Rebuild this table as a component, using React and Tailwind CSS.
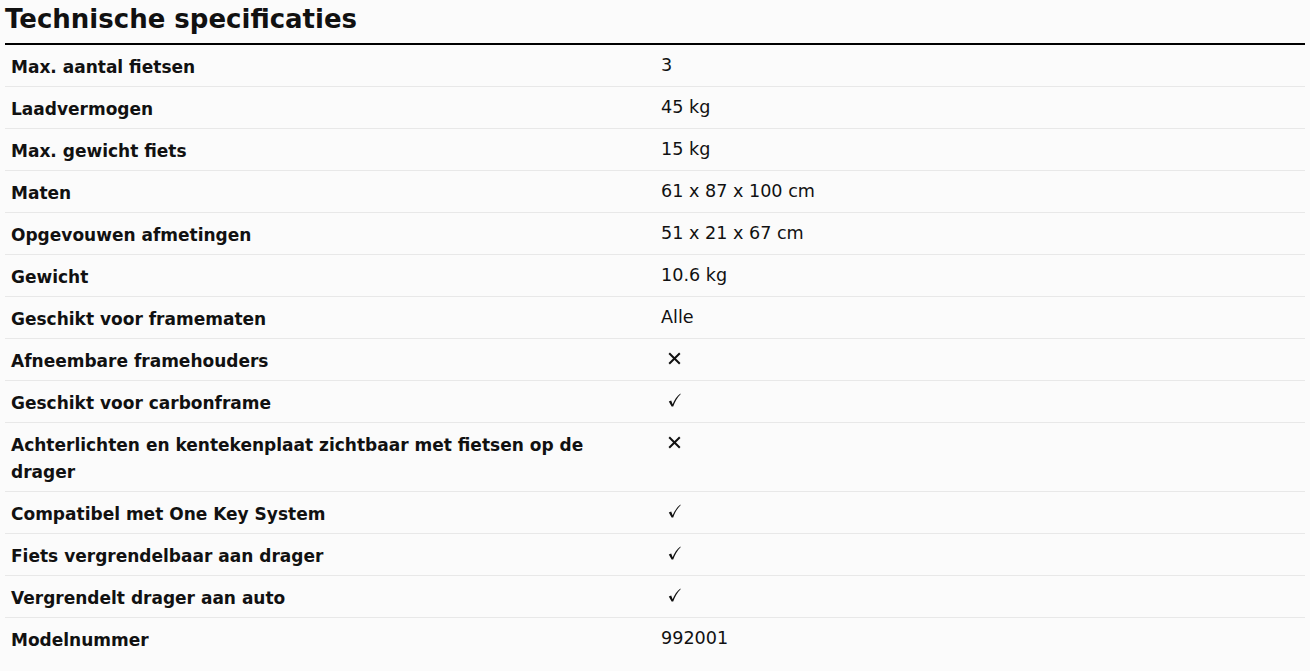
const specs = [
  ['Max. aantal fietsen', '3'],
  ['Laadvermogen', '45 kg'],
  ['Max. gewicht fiets', '15 kg'],
  ['Maten', '61 x 87 x 100 cm'],
  ['Opgevouwen afmetingen', '51 x 21 x 67 cm'],
  ['Gewicht', '10.6 kg'],
  ['Geschikt voor framematen', 'Alle'],
  ['Afneembare framehouders', 'no'],
  ['Geschikt voor carbonframe', 'yes'],
  ['Achterlichten en kentekenplaat zichtbaar met fietsen op de drager', 'no'],
  ['Compatibel met One Key System', 'yes'],
  ['Fiets vergrendelbaar aan drager', 'yes'],
  ['Vergrendelt drager aan auto', 'yes'],
  ['Modelnummer', '992001'],
];

function Cross() {
  return (
    <svg width="13" height="13" viewBox="0 0 13 13" className="inline-block ml-[7px] mt-[6px] align-top">
      <path d="M1.2 1.2 L11.8 11.8 M11.8 1.2 L1.2 11.8" stroke="#111" strokeWidth="2" fill="none" />
    </svg>
  );
}

function Check() {
  return (
    <svg width="13" height="14" viewBox="0 0 13 14" className="inline-block ml-[7px] mt-[5px] align-top">
      <path d="M0.8 8.6 L3.2 7.6 L4.6 11.2 C6.4 7.2 8.8 3.4 12.4 0.6 L12.6 1.2 C9.4 4.4 7 8.4 5.2 13.4 L3.6 13.4 Z" fill="#111" />
    </svg>
  );
}

export default function App() {
  return (
    <div className="min-h-screen bg-[#fbfbfb] px-[5px] pt-[2px] text-[#111] font-['DejaVu_Sans',sans-serif]">
      <h2 className="text-[26px] font-bold leading-[34px] pb-[7px] border-b-2 border-black">
        Technische specificaties
      </h2>
      <table className="w-full table-fixed border-collapse">
        <tbody>
          {specs.map(([label, value]) => (
            <tr key={label} className="border-b border-[#e8e8e8] last:border-b-0">
              <td className="w-1/2 align-top pl-[6px] pr-[40px] pt-[9px] pb-[5px] text-[17px] leading-[27px] font-bold">
                {label}
              </td>
              <td className="w-1/2 align-top px-[6px] pt-[7px] pb-[5px] text-[17.6px] leading-[27px]">
                {value === 'yes' ? <Check /> : value === 'no' ? <Cross /> : value}
              </td>
            </tr>
          ))}
        </tbody>
      </table>
    </div>
  );
}
